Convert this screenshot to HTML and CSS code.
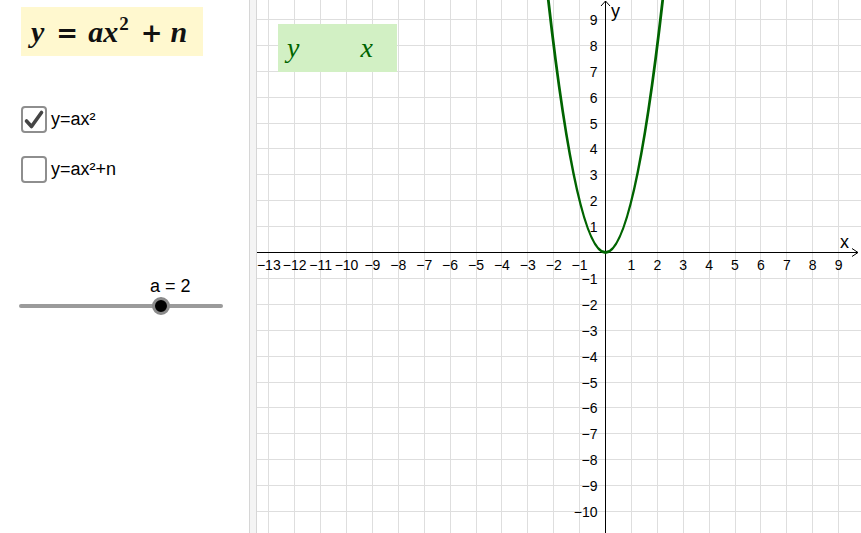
FILE: index.html
```html
<!DOCTYPE html>
<html>
<head>
<meta charset="utf-8">
<link rel="stylesheet" href="styles.css">
</head>
<body>
<div class="app">
  <aside class="panel">
    <div class="formula"><span class="mv">y</span><span class="mo eq">=</span><span class="mv">a</span><span class="mv">x</span><span class="sup">2</span><span class="mo plus">+</span><span class="mv">n</span></div>
    <div class="check-row first">
      <span class="box"><svg class="tick" width="22" height="23" viewBox="0 0 22 23"><path d="M3.5 13 L8.5 18.5 L18.5 4.5" fill="none" stroke="#454545" stroke-width="3.6" stroke-linecap="round" stroke-linejoin="round"/></svg></span>
      <span class="lbl">y=ax²</span>
    </div>
    <div class="check-row second">
      <span class="box"></span>
      <span class="lbl">y=ax²+n</span>
    </div>
    <div class="slider">
      <div class="slider-label">a = 2</div>
      <div class="track"><span class="knob"></span></div>
    </div>
  </aside>
  <div class="divider"></div>
  <main class="graph">
    <svg class="plot" width="604" height="533" viewBox="0 0 604 533">
      <path class="grid" d="M11.5 0V533M37.5 0V533M63.5 0V533M89.5 0V533M115.5 0V533M141.5 0V533M167.5 0V533M193.5 0V533M219.5 0V533M244.5 0V533M270.5 0V533M296.5 0V533M322.5 0V533M374.5 0V533M400.5 0V533M426.5 0V533M452.5 0V533M478.5 0V533M503.5 0V533M529.5 0V533M555.5 0V533M581.5 0V533
      M0 19.5H604M0 45.5H604M0 71.5H604M0 97.5H604M0 123.5H604M0 148.5H604M0 174.5H604M0 200.5H604M0 226.5H604M0 278.5H604M0 304.5H604M0 330.5H604M0 356.5H604M0 382.5H604M0 407.5H604M0 433.5H604M0 459.5H604M0 485.5H604M0 511.5H604"/>
      <path class="axis" d="M0 252.5H601M595 248.5L601 252.5L595 256.5M348.5 533V1M344 6L348.5 1L353 6"/>
      <g class="xl">
        <text x="11.8" y="269.5">−13</text>
        <text x="37.7" y="269.5">−12</text>
        <text x="63.6" y="269.5">−11</text>
        <text x="89.5" y="269.5">−10</text>
        <text x="115.4" y="269.5">−9</text>
        <text x="141.3" y="269.5">−8</text>
        <text x="167.2" y="269.5">−7</text>
        <text x="193.1" y="269.5">−6</text>
        <text x="219" y="269.5">−5</text>
        <text x="244.9" y="269.5">−4</text>
        <text x="270.8" y="269.5">−3</text>
        <text x="296.7" y="269.5">−2</text>
        <text x="322.6" y="269.5">−1</text>
        <text x="374.4" y="269.5">1</text>
        <text x="400.3" y="269.5">2</text>
        <text x="426.2" y="269.5">3</text>
        <text x="452.1" y="269.5">4</text>
        <text x="478" y="269.5">5</text>
        <text x="503.9" y="269.5">6</text>
        <text x="529.8" y="269.5">7</text>
        <text x="555.7" y="269.5">8</text>
        <text x="581.6" y="269.5">9</text>
      </g>
      <g class="yl">
        <text x="340.5" y="24.9">9</text>
        <text x="340.5" y="50.8">8</text>
        <text x="340.5" y="76.7">7</text>
        <text x="340.5" y="102.6">6</text>
        <text x="340.5" y="128.5">5</text>
        <text x="340.5" y="154.4">4</text>
        <text x="340.5" y="180.3">3</text>
        <text x="340.5" y="206.2">2</text>
        <text x="340.5" y="232.1">1</text>
        <text x="340.5" y="283.9">−1</text>
        <text x="340.5" y="309.8">−2</text>
        <text x="340.5" y="335.7">−3</text>
        <text x="340.5" y="361.6">−4</text>
        <text x="340.5" y="387.5">−5</text>
        <text x="340.5" y="413.4">−6</text>
        <text x="340.5" y="439.3">−7</text>
        <text x="340.5" y="465.2">−8</text>
        <text x="340.5" y="491.1">−9</text>
        <text x="340.5" y="517">−10</text>
      </g>
      <text class="axname" x="583" y="247.5">x</text>
      <text class="axname" x="354" y="17">y</text>
      <path class="curve" d="M288.93 -21.5 Q348.5 526.5 408.07 -21.5"/>
    </svg>
    <div class="legend"><span class="ly">y</span><span class="lx">x</span></div>
  </main>
</div>
</body>
</html>
```
FILE: styles.css
```css
html, body {
  margin: 0;
  padding: 0;
  background: #ffffff;
}
body {
  font-family: "Liberation Sans", Arial, sans-serif;
  overflow: hidden;
}
.app {
  display: flex;
  width: 861px;
  height: 533px;
}
.panel {
  width: 249px;
  flex: none;
  display: flex;
  flex-direction: column;
  align-items: flex-start;
}
.formula {
  margin-top: 7px;
  margin-left: 21px;
  width: 182px;
  height: 49px;
  box-sizing: border-box;
  padding-left: 10px;
  background: #fff8cf;
  line-height: 49px;
  white-space: nowrap;
  color: #111;
  overflow: hidden;
}
.mv {
  font-family: "Liberation Serif", "Times New Roman", serif;
  font-style: italic;
  font-weight: bold;
  font-size: 30px;
}
.mo {
  font-family: "DejaVu Serif", serif;
  font-weight: bold;
  font-size: 26px;
}
.eq {
  margin: 0 10px 0 12px;
}
.plus {
  margin: 0 8px 0 12px;
}
.sup {
  font-family: "Liberation Serif", "Times New Roman", serif;
  font-weight: bold;
  font-size: 19px;
  vertical-align: 12px;
  line-height: 0;
  margin-left: 1px;
}
.check-row {
  display: flex;
  align-items: center;
  gap: 4px;
  height: 27px;
  margin-left: 21px;
}
.check-row.first {
  margin-top: 50px;
}
.check-row.second {
  margin-top: 23px;
}
.box {
  width: 26px;
  height: 27px;
  box-sizing: border-box;
  border: 2px solid #8e8e8e;
  border-radius: 4px;
  background: #fff;
  display: flex;
  align-items: center;
  justify-content: center;
}
.tick {
  display: block;
}
.lbl {
  font-size: 18px;
  color: #000;
}
.slider {
  margin-top: 93px;
  margin-left: 19px;
  width: 204px;
}
.slider-label {
  font-size: 18px;
  line-height: 20px;
  height: 20px;
  padding-left: 131px;
  color: #000;
}
.track {
  position: relative;
  margin-top: 8px;
  height: 4px;
  border-radius: 2px;
  background: #9b9b9b;
}
.knob {
  position: absolute;
  left: 133px;
  top: -7px;
  width: 18px;
  height: 18px;
  box-sizing: border-box;
  border-radius: 50%;
  border: 3px solid #8a8a8a;
  background: #000;
}
.divider {
  width: 8px;
  flex: none;
  box-sizing: border-box;
  border-left: 1px solid #d6d6d6;
  border-right: 1px solid #d6d6d6;
  background: #f4f4f4;
}
.graph {
  flex: 1;
  position: relative;
  overflow: hidden;
}
.plot {
  display: block;
}
.grid {
  stroke: #dedede;
  stroke-width: 1;
  fill: none;
  shape-rendering: crispEdges;
}
.axis {
  stroke: #000;
  stroke-width: 1;
  fill: none;
}
.xl text {
  font-family: "Liberation Sans", Arial, sans-serif;
  font-size: 14px;
  text-anchor: middle;
  fill: #000;
}
.yl text {
  font-family: "Liberation Sans", Arial, sans-serif;
  font-size: 14px;
  text-anchor: end;
  fill: #000;
}
.axname {
  font-family: "Liberation Sans", Arial, sans-serif;
  font-size: 18px;
  fill: #000;
}
.curve {
  fill: none;
  stroke: #006400;
  stroke-width: 2.8;
}
.legend {
  position: absolute;
  left: 21px;
  top: 24px;
  width: 119px;
  height: 48px;
  box-sizing: border-box;
  padding-left: 9px;
  background: #d2f0c4;
  line-height: 48px;
  font-family: "Liberation Serif", "Times New Roman", serif;
  font-style: italic;
  font-size: 28px;
  color: #006400;
  white-space: nowrap;
}
.lx {
  margin-left: 61px;
}
```
